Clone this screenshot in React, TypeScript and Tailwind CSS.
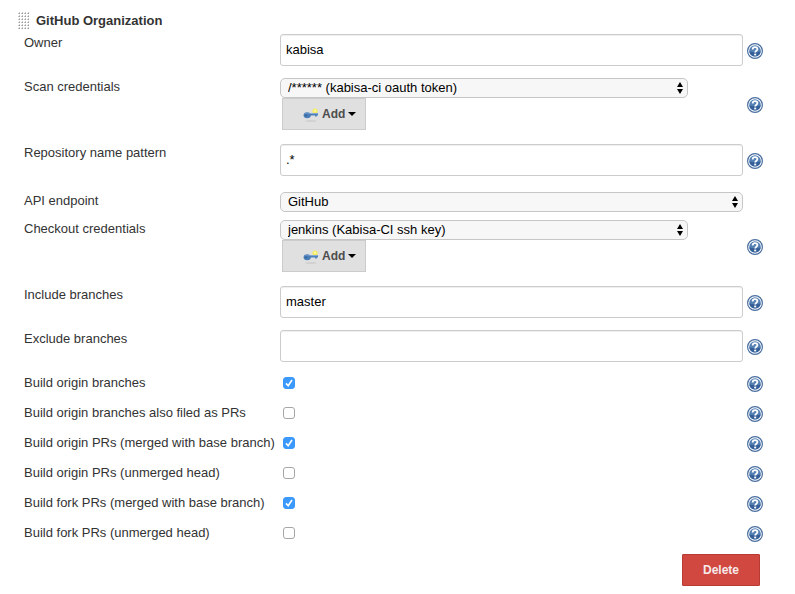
import React, { useId } from "react";

function HelpIcon() {
  return (
    <svg width="16" height="16" viewBox="0 0 16 16" aria-hidden="true">
      <circle cx="8" cy="8" r="7.4" fill="#fff" stroke="#4a6fa0" strokeWidth="1.2" />
      <circle cx="8" cy="8" r="5.8" fill="#5580b4" />
      <path d="M2.3 8.6a5.8 5.8 0 0 0 11.4 0c-3 1-8 1-11.4 0z" fill="#355f98" />
      <path
        d="M5.7 6.4c0-1.5 1-2.3 2.3-2.3s2.4.8 2.4 2c0 1.6-2.2 1.6-2.2 3.4"
        fill="none"
        stroke="#fff"
        strokeWidth="1.8"
      />
      <rect x="7.2" y="10.6" width="2" height="1.8" fill="#fff" />
    </svg>
  );
}

function KeyIcon() {
  return (
    <svg width="16" height="16" viewBox="0 0 16 16" aria-hidden="true">
      <ellipse cx="8" cy="15" rx="6" ry="0.8" fill="#cbcbcb" />
      <circle cx="12" cy="5" r="2.6" fill="#f4ea62" />
      <circle cx="12" cy="4.8" r="1.2" fill="#fdf9a0" />
      <path d="M5 7.2h10v2.4h-1.2v1h-1.8v-1H6z" fill="#4f82bb" />
      <ellipse cx="4.2" cy="9.2" rx="3.6" ry="3" fill="#4a7db8" />
      <path d="M1.8 7.8c1-1.2 3.4-1.2 4.6-.3h8" stroke="#86a9d2" strokeWidth="0.9" fill="none" />
      <ellipse cx="2.8" cy="9.3" rx="1" ry="0.9" fill="#2c5e96" />
    </svg>
  );
}

function DragHandle() {
  return (
    <svg width="12" height="18" viewBox="0 0 12 18" aria-hidden="true">
      <defs>
        <pattern id="grip" width="3" height="3" patternUnits="userSpaceOnUse">
          <rect x="1" y="1" width="1" height="1" fill="#9c9c9c" />
          <rect x="0" y="1" width="1" height="1" fill="#c9c9c9" />
          <rect x="1" y="0" width="1" height="1" fill="#c9c9c9" />
        </pattern>
      </defs>
      <rect width="12" height="18" fill="url(#grip)" />
    </svg>
  );
}

type RowProps = {
  label: string;
  id: string;
  help?: boolean;
  gap?: string;
  children: React.ReactNode;
};

function Row({ label, id, help = true, gap = "mb-3", children }: RowProps) {
  return (
    <div className={`flex ${gap}`}>
      <label htmlFor={id} className="w-64 shrink-0 whitespace-nowrap leading-[18px]">
        {label}
      </label>
      <div className="min-w-0 flex-1">{children}</div>
      <div className="ml-1 flex w-4 items-center pt-0.5">
        {help && (
          <button type="button" aria-label={`Help for ${label}`} className="-my-1">
            <HelpIcon />
          </button>
        )}
      </div>
    </div>
  );
}

function TextRow({ label, value, gap }: { label: string; value: string; gap?: string }) {
  const id = useId();
  return (
    <Row label={label} id={id} gap={gap}>
      <input
        id={id}
        type="text"
        defaultValue={value}
        className="block h-8 w-full rounded-[3px] border border-[#ccc] bg-white px-[5px] pb-0.5 text-black shadow-[inset_0_1px_1px_rgba(0,0,0,0.07)]"
      />
    </Row>
  );
}

function Select({ id, value }: { id: string; value: string }) {
  return (
    <div className="relative">
      <select
        id={id}
        className="block h-5 w-full appearance-none rounded-[5px] border border-[#c6c6c6] bg-[#f7f7f7] pr-5 pl-[7px] leading-[18px] text-black"
      >
        <option>{value}</option>
      </select>
      <svg
        className="pointer-events-none absolute top-1 right-[5px]"
        width="6"
        height="12"
        viewBox="0 0 6 12"
        aria-hidden="true"
      >
        <path d="M3 0 6 5H0zM3 12 6 7H0z" fill="#000" />
      </svg>
    </div>
  );
}

function CredentialsRow({ label, value }: { label: string; value: string }) {
  const id = useId();
  return (
    <Row label={label} id={id} gap="mb-3.5">
      <div className="pr-[55px]">
        <Select id={id} value={value} />
        <button
          type="button"
          className="ml-0.5 flex h-8 w-[84px] items-center border border-[#ccc] bg-[#e0e0e0] pl-5 text-xs font-bold text-[#4d4d4d]"
        >
          <KeyIcon />
          <span className="ml-[3px]">Add</span>
          <svg className="ml-[3px]" width="8" height="4" viewBox="0 0 8 4" aria-hidden="true">
            <path d="M0 0h8L4 4z" fill="#000" />
          </svg>
        </button>
      </div>
    </Row>
  );
}

function CheckRow({ label, checked }: { label: string; checked: boolean }) {
  const id = useId();
  return (
    <Row label={label} id={id}>
      <div className="relative flex h-[18px] items-center pl-[3px]">
        <input
          id={id}
          type="checkbox"
          defaultChecked={checked}
          className="peer size-3 appearance-none rounded-[3px] border border-[#a6a6a6] bg-white checked:border-[#3b99fc] checked:bg-[#3b99fc]"
        />
        <svg
          className="pointer-events-none absolute left-[3px] hidden peer-checked:block"
          width="12"
          height="12"
          viewBox="0 0 12 12"
          aria-hidden="true"
        >
          <path d="M3 6.4 5.2 8.8 9 3" fill="none" stroke="#fff" strokeWidth="1.6" />
        </svg>
      </div>
    </Row>
  );
}

const checks = [
  { label: "Build origin branches", checked: true },
  { label: "Build origin branches also filed as PRs", checked: false },
  { label: "Build origin PRs (merged with base branch)", checked: true },
  { label: "Build origin PRs (unmerged head)", checked: false },
  { label: "Build fork PRs (merged with base branch)", checked: true },
  { label: "Build fork PRs (unmerged head)", checked: false },
];

export default function App() {
  const endpointId = useId();
  return (
    <form className="min-h-screen bg-white pt-3 pr-8 pb-2 pl-[18px] font-['Helvetica','Liberation_Sans',Arial,sans-serif] text-[13px] text-[#333]">
      <div className="mb-1 flex h-[18px] items-center gap-1.5">
        <DragHandle />
        <h2 className="font-bold">GitHub Organization</h2>
      </div>
      <div className="pl-1.5">
        <TextRow label="Owner" value="kabisa" />
        <CredentialsRow label="Scan credentials" value="/****** (kabisa-ci oauth token)" />
        <TextRow label="Repository name pattern" value=".*" gap="mb-4" />
        <Row label="API endpoint" id={endpointId} help={false} gap="mb-2">
          <Select id={endpointId} value="GitHub" />
        </Row>
        <CredentialsRow label="Checkout credentials" value="jenkins (Kabisa-CI ssh key)" />
        <TextRow label="Include branches" value="master" />
        <TextRow label="Exclude branches" value="" />
        {checks.map((c) => (
          <CheckRow key={c.label} label={c.label} checked={c.checked} />
        ))}
        <div className="flex justify-end pr-[3px]">
          <button
            type="button"
            className="h-8 w-[78px] rounded-[1px] border border-[#b93a32] bg-[#d04840] text-xs font-bold text-[#f6eaea]"
          >
            Delete
          </button>
        </div>
      </div>
    </form>
  );
}
